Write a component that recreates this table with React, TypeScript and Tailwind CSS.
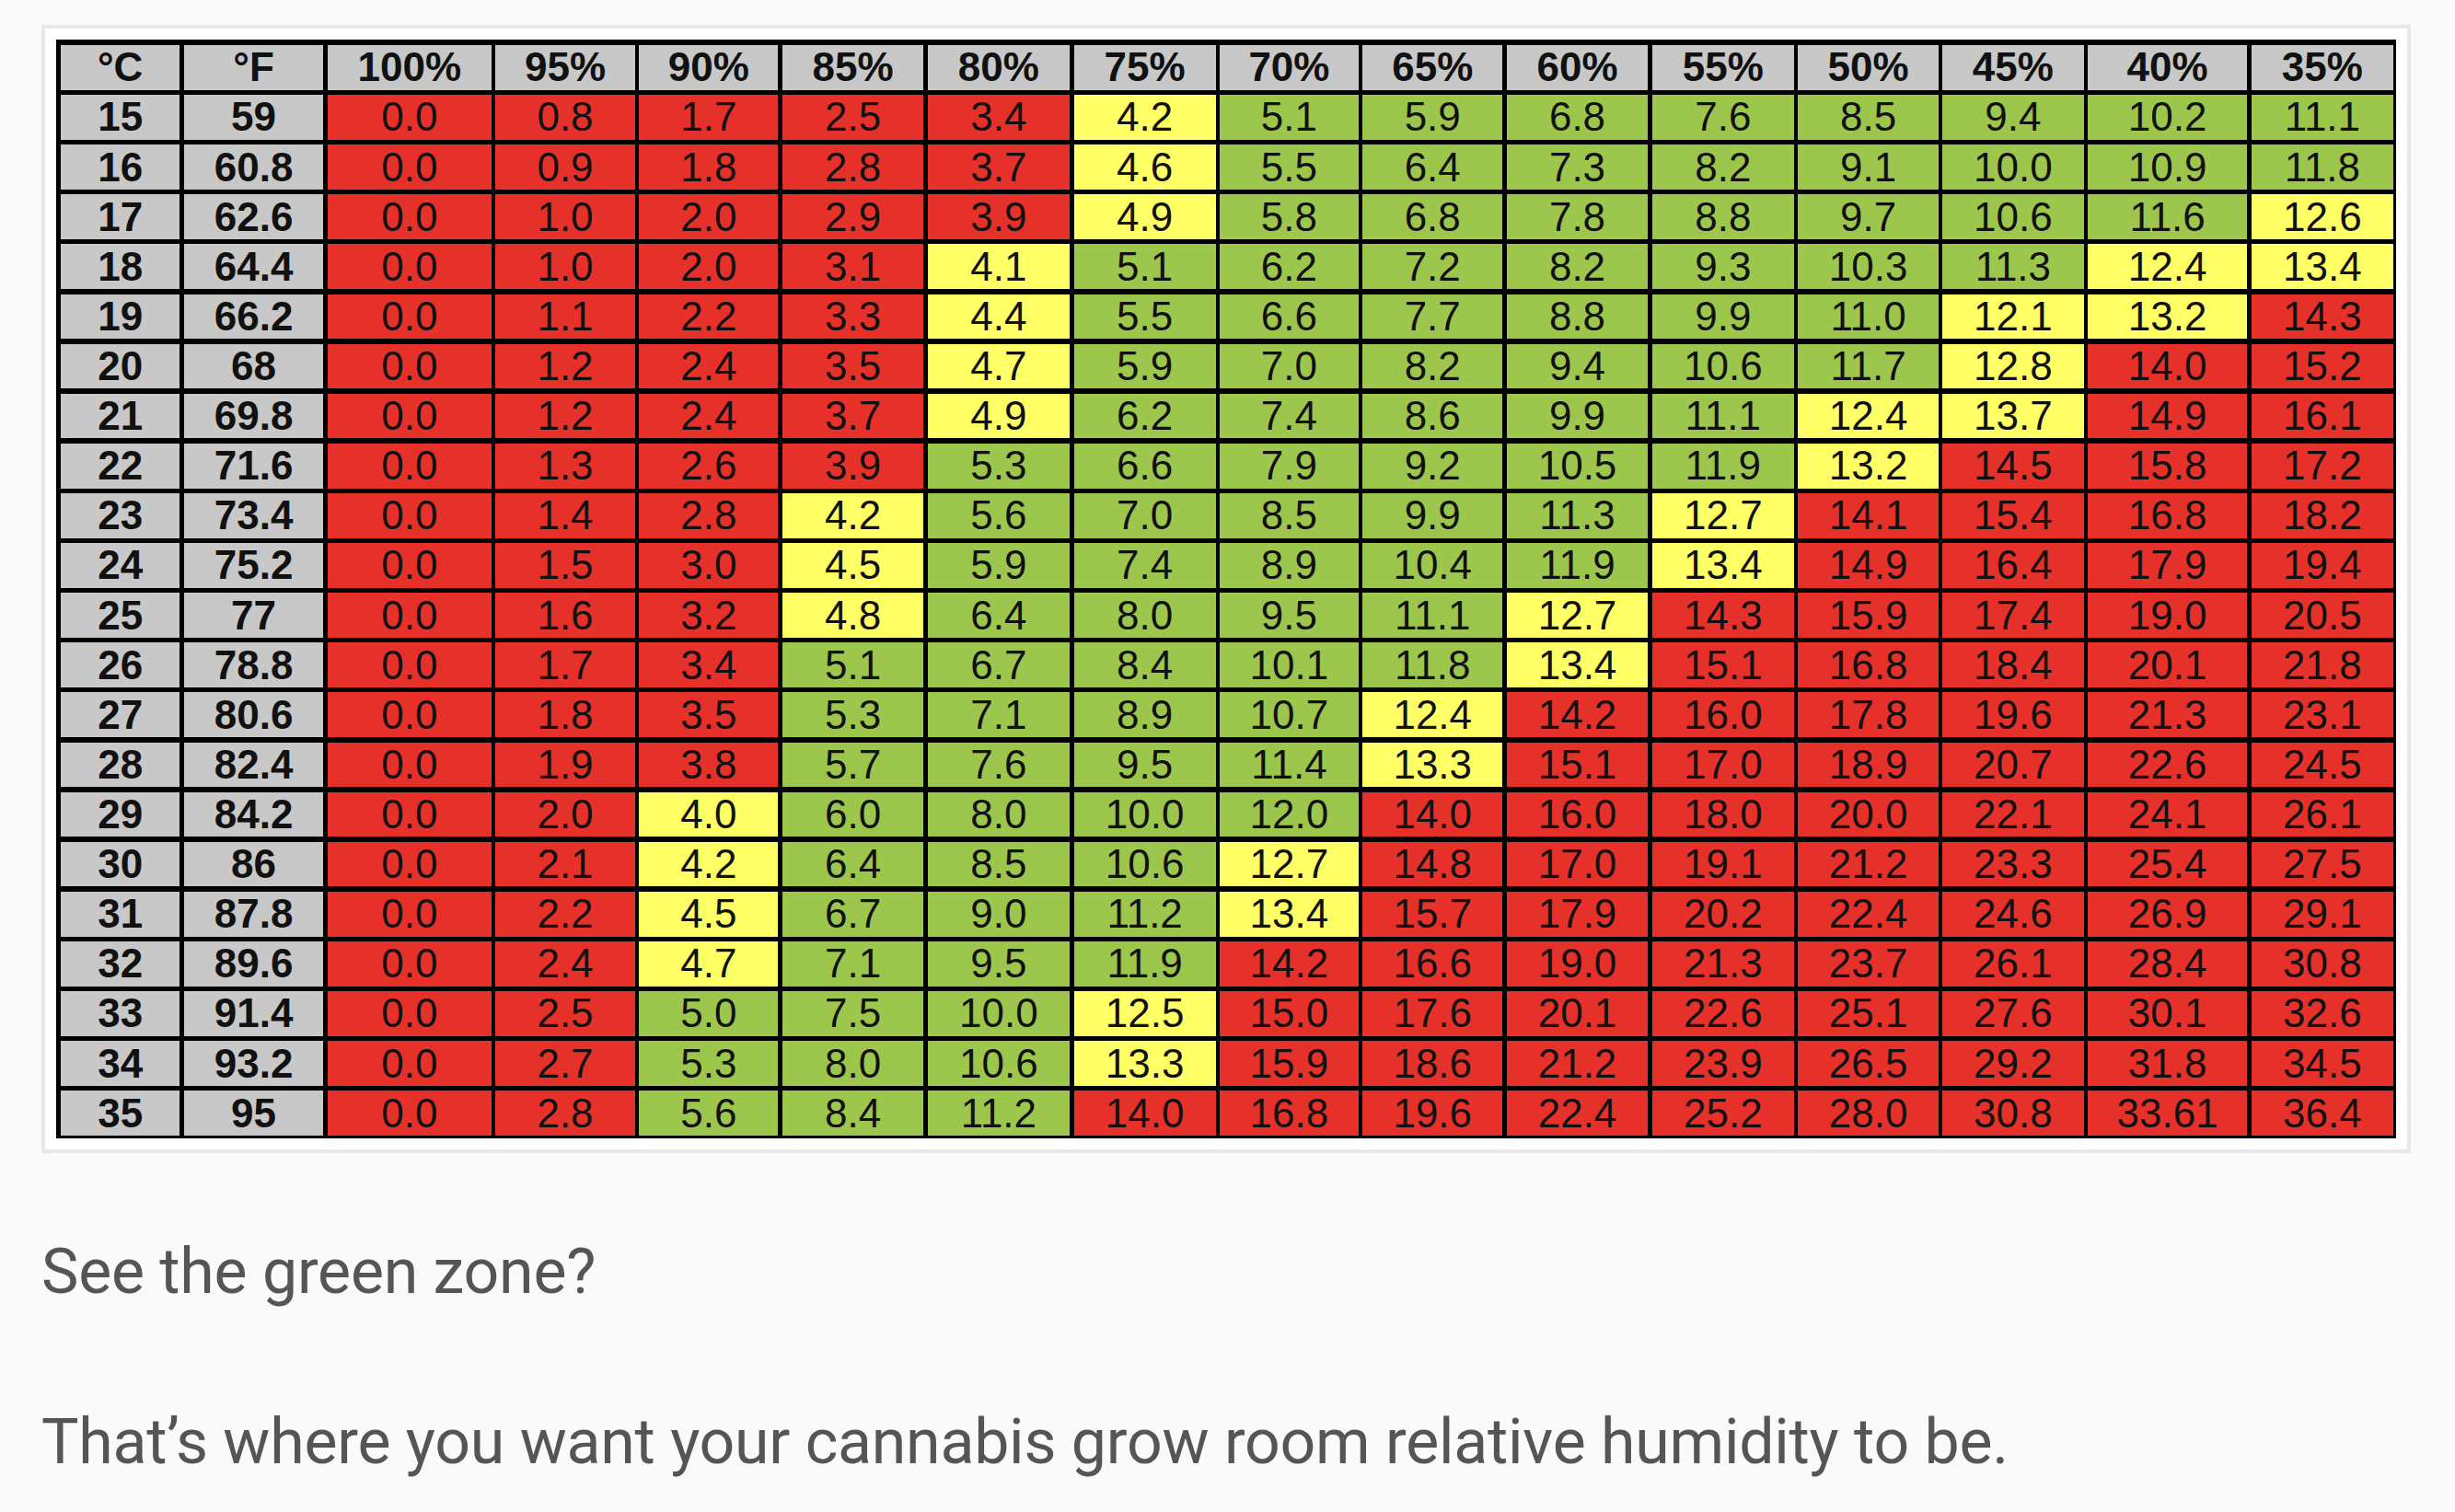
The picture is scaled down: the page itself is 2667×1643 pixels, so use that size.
const headers = ["°C", "°F", "100%", "95%", "90%", "85%", "80%", "75%", "70%", "65%", "60%", "55%", "50%", "45%", "40%", "35%"];

const rows: [string, string, string[]][] = [
  ["15", "59", ["0.0", "0.8", "1.7", "2.5", "3.4", "4.2", "5.1", "5.9", "6.8", "7.6", "8.5", "9.4", "10.2", "11.1"]],
  ["16", "60.8", ["0.0", "0.9", "1.8", "2.8", "3.7", "4.6", "5.5", "6.4", "7.3", "8.2", "9.1", "10.0", "10.9", "11.8"]],
  ["17", "62.6", ["0.0", "1.0", "2.0", "2.9", "3.9", "4.9", "5.8", "6.8", "7.8", "8.8", "9.7", "10.6", "11.6", "12.6"]],
  ["18", "64.4", ["0.0", "1.0", "2.0", "3.1", "4.1", "5.1", "6.2", "7.2", "8.2", "9.3", "10.3", "11.3", "12.4", "13.4"]],
  ["19", "66.2", ["0.0", "1.1", "2.2", "3.3", "4.4", "5.5", "6.6", "7.7", "8.8", "9.9", "11.0", "12.1", "13.2", "14.3"]],
  ["20", "68", ["0.0", "1.2", "2.4", "3.5", "4.7", "5.9", "7.0", "8.2", "9.4", "10.6", "11.7", "12.8", "14.0", "15.2"]],
  ["21", "69.8", ["0.0", "1.2", "2.4", "3.7", "4.9", "6.2", "7.4", "8.6", "9.9", "11.1", "12.4", "13.7", "14.9", "16.1"]],
  ["22", "71.6", ["0.0", "1.3", "2.6", "3.9", "5.3", "6.6", "7.9", "9.2", "10.5", "11.9", "13.2", "14.5", "15.8", "17.2"]],
  ["23", "73.4", ["0.0", "1.4", "2.8", "4.2", "5.6", "7.0", "8.5", "9.9", "11.3", "12.7", "14.1", "15.4", "16.8", "18.2"]],
  ["24", "75.2", ["0.0", "1.5", "3.0", "4.5", "5.9", "7.4", "8.9", "10.4", "11.9", "13.4", "14.9", "16.4", "17.9", "19.4"]],
  ["25", "77", ["0.0", "1.6", "3.2", "4.8", "6.4", "8.0", "9.5", "11.1", "12.7", "14.3", "15.9", "17.4", "19.0", "20.5"]],
  ["26", "78.8", ["0.0", "1.7", "3.4", "5.1", "6.7", "8.4", "10.1", "11.8", "13.4", "15.1", "16.8", "18.4", "20.1", "21.8"]],
  ["27", "80.6", ["0.0", "1.8", "3.5", "5.3", "7.1", "8.9", "10.7", "12.4", "14.2", "16.0", "17.8", "19.6", "21.3", "23.1"]],
  ["28", "82.4", ["0.0", "1.9", "3.8", "5.7", "7.6", "9.5", "11.4", "13.3", "15.1", "17.0", "18.9", "20.7", "22.6", "24.5"]],
  ["29", "84.2", ["0.0", "2.0", "4.0", "6.0", "8.0", "10.0", "12.0", "14.0", "16.0", "18.0", "20.0", "22.1", "24.1", "26.1"]],
  ["30", "86", ["0.0", "2.1", "4.2", "6.4", "8.5", "10.6", "12.7", "14.8", "17.0", "19.1", "21.2", "23.3", "25.4", "27.5"]],
  ["31", "87.8", ["0.0", "2.2", "4.5", "6.7", "9.0", "11.2", "13.4", "15.7", "17.9", "20.2", "22.4", "24.6", "26.9", "29.1"]],
  ["32", "89.6", ["0.0", "2.4", "4.7", "7.1", "9.5", "11.9", "14.2", "16.6", "19.0", "21.3", "23.7", "26.1", "28.4", "30.8"]],
  ["33", "91.4", ["0.0", "2.5", "5.0", "7.5", "10.0", "12.5", "15.0", "17.6", "20.1", "22.6", "25.1", "27.6", "30.1", "32.6"]],
  ["34", "93.2", ["0.0", "2.7", "5.3", "8.0", "10.6", "13.3", "15.9", "18.6", "21.2", "23.9", "26.5", "29.2", "31.8", "34.5"]],
  ["35", "95", ["0.0", "2.8", "5.6", "8.4", "11.2", "14.0", "16.8", "19.6", "22.4", "25.2", "28.0", "30.8", "33.61", "36.4"]],
];

// too dry / borderline / ideal, by the chart's own banding
function zone(value: string) {
  const v = parseFloat(value);
  if (v < 4) return "bg-[#e5312a]";
  if (v < 5) return "bg-[#ffff66]";
  if (v <= 12) return "bg-[#9dc64d]";
  if (v < 14) return "bg-[#ffff66]";
  return "bg-[#e5312a]";
}

function HeadCell({ children }: { children: string }) {
  return (
    <div className="flex items-center justify-center bg-[#c8c8c8] font-bold text-[44px] leading-none text-[#111]">
      {children}
    </div>
  );
}

function ChartTable() {
  return (
    <div className="grid h-[1194px] grid-cols-[130fr_152fr_179fr_152fr_152fr_154fr_155fr_155fr_151fr_153fr_154fr_155fr_153fr_154fr_174fr_155fr] grid-rows-[repeat(22,minmax(0,1fr))] gap-x-[4.5px] gap-y-[5.5px] bg-black pt-[6px] pl-[5px] pr-[3px] pb-[3px] font-['Liberation_Sans',Arial,sans-serif]">
      {headers.map((h) => (
        <HeadCell key={h}>{h}</HeadCell>
      ))}
      {rows.map(([c, f, values]) => (
        <>
          <HeadCell key={c}>{c}</HeadCell>
          <HeadCell key={c + "f"}>{f}</HeadCell>
          {values.map((v, i) => (
            <div
              key={c + "-" + i}
              className={`flex items-center justify-center text-[44px] leading-none text-[#111] ${zone(v)}`}
            >
              {v}
            </div>
          ))}
        </>
      ))}
    </div>
  );
}

export default function App() {
  return (
    <div className="min-h-screen bg-[#fafafa] pt-[27px] pl-[45px] pr-[48px] pb-10">
      <div className="border-4 border-[#e8e8e8] bg-white p-[12px]">
        <ChartTable />
      </div>
      <p className="mt-[79px] font-['Roboto',sans-serif] text-[68px] leading-[100px] tracking-[-0.25px] text-[#555]">
        See the green zone?
      </p>
      <p className="mt-[85px] font-['Roboto',sans-serif] text-[68px] leading-[100px] tracking-[-0.25px] text-[#555]">
        That’s where you want your cannabis grow room relative humidity to be.
      </p>
    </div>
  );
}
